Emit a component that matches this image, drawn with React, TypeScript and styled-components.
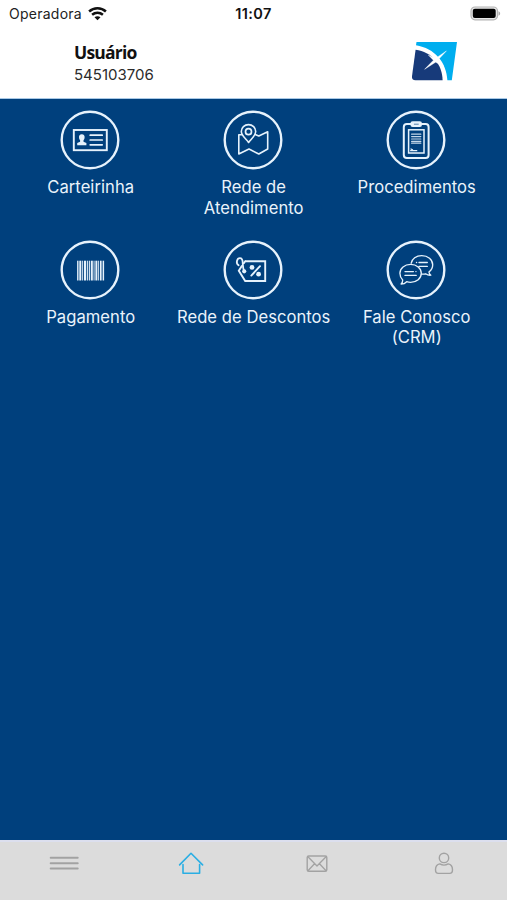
import React from 'react';
import styled, { createGlobalStyle } from 'styled-components';

const GlobalStyle = createGlobalStyle`
  * { box-sizing: border-box; }
  body { margin: 0; background: #fff; }
`;

const Screen = styled.div`
  display: flex;
  flex-direction: column;
  width: 100%;
  height: 100vh;
  overflow: hidden;
  font-family: Inter, 'Liberation Sans', sans-serif;
`;

const StatusBar = styled.div`
  display: grid;
  grid-template-columns: 1fr auto 1fr;
  align-items: center;
  height: 28px;
  padding: 0 6px;
  background: #fff;
  color: #222;
  font-size: 14px;
  line-height: 16px;
  svg { display: block; margin-bottom: 2px; }
`;

const Carrier = styled.div`
  display: flex;
  align-items: center;
  gap: 6px;
  padding-left: 3px;
  letter-spacing: 0.25px;
`;

const Clock = styled.div`
  color: #111;
  font-size: 14.5px;
  font-weight: 600;
  letter-spacing: 0.4px;
`;

const Battery = styled.div`
  display: flex;
  justify-content: flex-end;
`;

const Header = styled.header`
  display: flex;
  justify-content: space-between;
  height: 71px;
  padding: 12px 48px 0 74px;
  background: #fff;
  border-bottom: 1px solid #a9c9e6;
`;

const UserName = styled.div`
  font: 700 17.5px/24px 'Open Sans', 'Noto Sans', sans-serif;
  letter-spacing: -0.8px;
  color: #111;
`;

const UserNumber = styled.div`
  font-size: 15px;
  line-height: 21px;
  color: #2b2b2b;
`;

const Main = styled.main`
  flex: 1;
  background: #00407d;
  padding: 11px 8.5px 0;
`;

const Grid = styled.div`
  display: grid;
  grid-template-columns: repeat(3, 163px);
  grid-auto-rows: 129.5px;
`;

const Tile = styled.a`
  display: flex;
  flex-direction: column;
  align-items: center;
  color: #eaf3fb;
`;

const TileIcon = styled.svg`
  display: block;
  width: 60px;
  height: 60px;
  flex: none;
  fill: none;
  stroke: #e6f2fc;
  stroke-width: 1.6;
  stroke-linejoin: round;
  stroke-linecap: round;
`;

const Label = styled.span<{ $narrow?: boolean }>`
  margin: 7px 0 0 1.4px;
  max-width: ${(p) => (p.$narrow ? '125px' : '163px')};
  font-size: 16.6px;
  line-height: 20.5px;
  letter-spacing: 0.04px;
  text-align: center;
`;

const TabBar = styled.nav`
  display: grid;
  grid-template-columns: repeat(4, 1fr);
  height: 60px;
  padding: 8px 0 0 1px;
  background: #dcdcdc;
  border-top: 2px solid #dcdfee;
`;

const Tab = styled.a<{ $active?: boolean }>`
  display: flex;
  justify-content: center;
  color: ${(p) => (p.$active ? '#2aaee3' : '#a2a2a2')};
  svg {
    display: block;
    fill: none;
    stroke: currentColor;
    stroke-width: 1.6;
    stroke-linecap: round;
    stroke-linejoin: round;
  }
`;

const CardIcon = () => (
  <>
    <rect x="13.8" y="20" width="33" height="20.2" strokeWidth="1.9" strokeLinejoin="miter" />
    <path d="M30.2 25.2h12M30.2 30h12M30.2 34.8h12" strokeWidth="1.7" />
    <path
      d="M21.8 24.3c2.1 0 3 1.4 2.8 3.2-.1 1.3-.6 2.2-1.1 2.8v1.5l2.9 1.3v2.2h-9.2v-2.2l2.9-1.3v-1.5c-.5-.6-1-1.5-1.1-2.8-.2-1.8.7-3.2 2.8-3.2z"
      fill="#e6f2fc"
      stroke="none"
    />
  </>
);

const MapIcon = () => (
  <>
    <path d="M18.5 24.8h-2.7V44L26 39l9.8 5 8.9-5V21.8L35.8 26l-3.6-1.6" />
    <path d="M25.6 32.5c-1.8-3-7.3-6.7-7.3-11 0-4 3.2-6.9 7.2-6.9s7.2 2.9 7.2 6.9c0 4.3-5.2 8-7.1 11z" />
    <circle cx="25.5" cy="21.7" r="3" strokeWidth="1.7" />
  </>
);

const ClipboardIcon = () => (
  <>
    <rect x="17.8" y="14.1" width="24.8" height="33.8" rx="3" strokeWidth="2" />
    <rect x="22.6" y="19.8" width="15.4" height="23.2" strokeWidth="1.5" strokeLinejoin="miter" />
    <rect x="25.2" y="12" width="10" height="4.2" rx="1.5" fill="#e6f2fc" />
    <path d="M28.3 14.2h4" stroke="#527faa" strokeWidth="1" />
    <path d="M25.6 24.2h9.2M25.6 26.6h9.2M25.6 29h9.2M25.6 31.4h9.2M25.6 33.2h9.2" strokeWidth="1.2" opacity=".85" />
    <path d="M24.6 40.7h6.2M25 39l1.5.8" strokeWidth="1.2" />
  </>
);

const bars: [number, number][] = [
  [17.1, 1.4], [19.3, 2], [22.2, 0.9], [24, 2.2], [27.1, 1.1], [29.1, 0.9],
  [30.8, 2], [33.6, 0.9], [35.4, 2], [38.2, 0.9], [40, 1.6], [42.6, 1.5],
];

const BarcodeIcon = () => (
  <g fill="#e6f2fc" stroke="none">
    {bars.map(([x, w]) => (
      <rect key={x} x={x} y="20.7" width={w} height="19.8" />
    ))}
  </g>
);

const TagIcon = () => (
  <>
    <path d="M22.2 21.2h20v19.8h-20l-6.4-10.2 3-4.8M20.8 23.2l1.4-2" strokeWidth="1.9" strokeLinejoin="miter" />
    <path d="M15.6 25.2c-3.2-2.1-1.6-7 1.3-7 3.4 0 2.7 3.6 2.9 6.3.1 2.4.5 4.3 1.3 6.6" strokeWidth="1.8" />
    <circle cx="21.2" cy="31.3" r="2.1" fill="#e6f2fc" stroke="none" />
    <path d="M28.3 35.6 37 26.2" strokeWidth="1.9" />
    <circle cx="29" cy="27.4" r="2.4" fill="#e6f2fc" stroke="none" />
    <circle cx="35.6" cy="34.2" r="2.4" fill="#e6f2fc" stroke="none" />
  </>
);

const ChatIcon = () => (
  <>
    <path d="M25.2 23.2c.7-4.3 5-7.6 10.5-7.6 6.2 0 11 4 11 9.2 0 3-1.5 5.6-3.8 7.2.2 1.3.9 2.3 1.9 3.2-2 .2-3.7-.4-5.2-1.4-1.5.4-2.8.5-4.2.3" strokeWidth="1.35" />
    <path d="M24.6 24.4c6 0 10.7 3.9 10.7 8.9s-4.7 9-10.7 9c-1.4 0-2.7-.2-3.9-.6-1.5 1.6-3.3 2.4-5.6 2.4 1.1-1.1 1.6-2.4 1.6-4.2-1.7-1.6-2.8-3.9-2.8-6.6 0-5 4.7-8.9 10.7-8.9z" strokeWidth="1.35" />
    <path d="M33 22.5h8.3M33 26.4h8.3M30.5 22.5h.1M19 31.6h8.4M19 35.4h11.2M29.9 31.6h.1" strokeWidth="1.35" />
  </>
);

const services = [
  { label: 'Carteirinha', Icon: CardIcon },
  { label: 'Rede de Atendimento', Icon: MapIcon, narrow: true },
  { label: 'Procedimentos', Icon: ClipboardIcon },
  { label: 'Pagamento', Icon: BarcodeIcon },
  { label: 'Rede de Descontos', Icon: TagIcon },
  { label: 'Fale Conosco (CRM)', Icon: ChatIcon, narrow: true },
];

const BrandLogo = () => (
  <svg width="48" height="42" viewBox="0 0 48 42">
    <path d="M5.5 2H46l-5.2 38.2h-4.4C35.5 22.3 23.7 8.2 5 5.2z" fill="#00aeef" />
    <path d="M4.6 9.8C20.8 11.9 31.3 24.5 31.6 40.2H4.5C1.9 40.2.7 38.7 1 36.2z" fill="#173a7a" />
    <path d="M35.4 10.9 26.7 20.2l5.9 5.8-8-3.8-11 7.1 8.8-9.1-5.1-5.1 7.1 3.4z" fill="#fff" stroke="#fff" strokeWidth=".4" />
  </svg>
);

export default function App() {
  return (
    <Screen>
      <GlobalStyle />
      <StatusBar>
        <Carrier>
          Operadora
          <svg width="19" height="15" viewBox="0 0 19 15" fill="none" stroke="#111" strokeWidth="2.5">
            <path d="M1.1 5.5c4.7-4.3 12.1-4.3 16.8 0M4.1 8.8c3.1-2.7 7.7-2.7 10.8 0" />
            <path d="M9.5 14.3 6.5 11.3c1.7-1.5 4.3-1.5 6 0z" fill="#111" stroke="none" />
          </svg>
        </Carrier>
        <Clock>11:07</Clock>
        <Battery>
          <svg width="31" height="15" viewBox="0 0 31 15">
            <rect x="1" y="1" width="26.5" height="12.8" rx="4" fill="#e9e9e9" stroke="#b4b4b4" strokeWidth="1.2" />
            <rect x="2.8" y="2.8" width="22.9" height="9.2" rx="2" fill="#000" />
            <path d="M28.5 5.2c2.2.8 2.2 3.7 0 4.5z" fill="#aaa" />
          </svg>
        </Battery>
      </StatusBar>
      <Header>
        <div>
          <UserName>Usuário</UserName>
          <UserNumber>545103706</UserNumber>
        </div>
        <BrandLogo />
      </Header>
      <Main>
        <Grid>
          {services.map(({ label, Icon, narrow }) => (
            <Tile key={label}>
              <TileIcon viewBox="0 0 60 60">
                <circle cx="30" cy="30" r="28.3" strokeWidth="2.4" />
                <Icon />
              </TileIcon>
              <Label $narrow={narrow}>{label}</Label>
            </Tile>
          ))}
        </Grid>
      </Main>
      <TabBar>
        <Tab>
          <svg width="30" height="26" viewBox="0 0 30 26">
            <path d="M1.7 7.8h27M1.7 13.2h27M1.7 18.6h27" strokeWidth="2" />
          </svg>
        </Tab>
        <Tab $active>
          <svg width="28" height="26" viewBox="0 0 28 26">
            <path d="M2.6 14.9 14 3.3l11.6 11.6M6 14.5v8.8h16.6v-8.8" />
          </svg>
        </Tab>
        <Tab>
          <svg width="24" height="26" viewBox="0 0 24 26">
            <rect x="2.2" y="6" width="19.6" height="15.3" rx="1.6" strokeWidth="1.4" />
            <path d="m3.2 7 8.8 9 8.8-9M3.2 20.5l6.3-6.7M20.8 20.5l-6.3-6.7" strokeWidth="1.3" />
          </svg>
        </Tab>
        <Tab>
          <svg width="24" height="26" viewBox="0 0 24 26">
            <circle cx="12" cy="7.9" r="4.7" strokeWidth="1.4" />
            <path d="M7.8 13.9c2.5 1.5 5.9 1.5 8.4 0 2.6.5 4.3 2.7 4.3 5.8 0 2.4-.8 3.7-2.8 3.7H6.3c-2 0-2.8-1.3-2.8-3.7 0-3.1 1.7-5.3 4.3-5.8z" strokeWidth="1.4" />
          </svg>
        </Tab>
      </TabBar>
    </Screen>
  );
}
